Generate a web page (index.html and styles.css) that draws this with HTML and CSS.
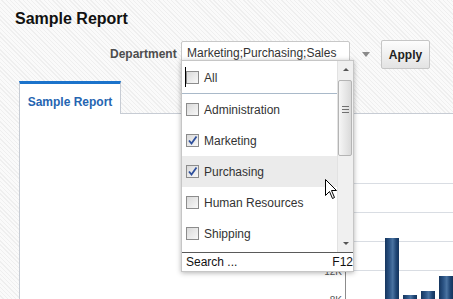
FILE: index.html
```html
<html>
<head>
    <title>Sample Report</title>
    <link rel="stylesheet" href="styles.css">
</head>
<body>
<h1 class="title">Sample Report</h1>

<div class="filter">
    <span class="filter-label">Department</span>
    <div class="select">
        <div class="select-box">Marketing;Purchasing;Sales</div>
        <div class="dropdown">
            <div class="dropdown-body">
                <ul class="options">
                    <li class="option option-all"><span class="check"></span>All</li>
                    <li class="option"><span class="check"></span>Administration</li>
                    <li class="option"><span class="check"><svg viewBox="0 0 11 11"><path d="M2 5.5 L4.5 8.5 L9.5 1.5"/></svg></span>Marketing</li>
                    <li class="option option-hover"><span class="check"><svg viewBox="0 0 11 11"><path d="M2 5.5 L4.5 8.5 L9.5 1.5"/></svg></span>Purchasing</li>
                    <li class="option"><span class="check"></span>Human Resources</li>
                    <li class="option"><span class="check"></span>Shipping</li>
                </ul>
                <div class="scrollbar">
                    <div class="scroll-btn"><span class="arrow-up"></span></div>
                    <div class="scroll-thumb"><span class="grip"></span></div>
                    <div class="scroll-track"></div>
                    <div class="scroll-btn"><span class="arrow-down"></span></div>
                </div>
            </div>
            <div class="dropdown-foot"><span>Search ...</span><span>F12</span></div>
        </div>
    </div>
    <span class="select-arrow"></span>
    <button class="apply">Apply</button>
</div>

<div class="tabs">
    <div class="tab">Sample Report</div>
</div>
<div class="panel">
    <div class="chart">
        <div class="axis">
            <span>24K</span>
            <span>20K</span>
            <span>16K</span>
            <span>12K</span>
            <span>8K</span>
        </div>
        <div class="plot">
            <div class="bar" style="height: 85px"></div>
            <div class="bar" style="height: 28px"></div>
            <div class="bar" style="height: 32px"></div>
            <div class="bar" style="height: 47px"></div>
        </div>
    </div>
</div>

<svg class="pointer" width="13" height="21" viewBox="0 0 13 21">
    <path d="M0.5 0.5 L0.5 16.5 L4.5 12.5 L7.5 19.5 L9.5 18.5 L6.5 11.5 L11.5 11.5 Z" fill="#fff" stroke="#000" stroke-width="1"/>
</svg>
</body>
</html>
```

FILE: styles.css
```css
body {
    margin: 0;
    height: 299px;
    overflow: hidden;
    position: relative;
    font-family: "Liberation Sans", Arial, sans-serif;
    font-size: 12px;
    color: #333;
    background: repeating-linear-gradient(45deg, #fafafa 0, #fafafa 2px, #efefef 2px, #efefef 3px);
}
.title {
    margin: 0;
    padding: 9px 15px 0;
    font-size: 16px;
    line-height: 19px;
    font-weight: bold;
    color: #111;
}
.filter {
    display: flex;
    align-items: flex-start;
    margin-top: 12px;
    padding-left: 110px;
    height: 29px;
}
.filter-label {
    width: 71px;
    line-height: 29px;
    font-weight: bold;
    color: #4d4d4d;
}
.select {
    position: relative;
    margin-top: 1px;
}
.select-box {
    width: 162px;
    height: 22px;
    line-height: 22px;
    padding-left: 5px;
    border: 1px solid #c8c8c8;
    border-radius: 2px;
    background: #fff;
    color: #333;
    white-space: nowrap;
}
.select-arrow {
    align-self: center;
    margin-left: 12px;
    width: 0;
    height: 0;
    border-left: 4px solid transparent;
    border-right: 4px solid transparent;
    border-top: 5px solid #8a8a8a;
}
.apply {
    margin-left: 11px;
    width: 49px;
    height: 29px;
    padding: 0;
    border: 1px solid #c6c6c6;
    border-radius: 2px;
    background: linear-gradient(#fdfdfd, #e3e3e3);
    font-family: "Liberation Sans", Arial, sans-serif;
    font-size: 12px;
    font-weight: bold;
    color: #222;
}

/* dropdown list */
.dropdown {
    position: absolute;
    left: 0;
    top: 19px;
    z-index: 10;
    width: 173px;
    box-sizing: border-box;
    border: 1px solid #c6c6c6;
    background: #fff;
    box-shadow: 0 1px 5px rgba(0, 0, 0, 0.3);
}
.dropdown-body {
    display: flex;
    height: 191px;
}
.options {
    flex: 1;
    margin: 0;
    padding: 1px 0 0;
    list-style: none;
    overflow: hidden;
}
.option {
    display: flex;
    align-items: center;
    height: 31px;
    padding-left: 4px;
    color: #333;
    white-space: nowrap;
}
.option-all {
    position: relative;
    border-bottom: 1px solid #a9b9c9;
}
.option-all::before {
    content: "";
    position: absolute;
    left: 3px;
    top: 5px;
    width: 1px;
    height: 20px;
    background: #000;
}
.option-hover {
    background: #ebebeb;
}
.check {
    display: inline-block;
    width: 11px;
    height: 11px;
    margin-right: 5px;
    border: 1px solid #8c8c8c;
    background: linear-gradient(135deg, #d9d9d9, #f8f8f8);
}
.check svg {
    display: block;
    width: 11px;
    height: 11px;
    fill: none;
    stroke: #2d4f9c;
    stroke-width: 1.8;
}
.scrollbar {
    display: flex;
    flex-direction: column;
    width: 15px;
    border-left: 1px solid #e2e2e2;
    background: #f0f0f0;
}
.scroll-btn {
    display: flex;
    align-items: center;
    justify-content: center;
    height: 17px;
}
.arrow-up {
    border-left: 3px solid transparent;
    border-right: 3px solid transparent;
    border-bottom: 3px solid #555;
}
.arrow-down {
    border-left: 3px solid transparent;
    border-right: 3px solid transparent;
    border-top: 3px solid #555;
}
.scroll-thumb {
    display: flex;
    justify-content: center;
    height: 74px;
    margin: 2px 1px 0 0;
    border: 1px solid #b4b4b4;
    border-radius: 2px;
    background: linear-gradient(90deg, #f6f6f6, #dadada);
}
.grip {
    width: 7px;
    height: 7px;
    margin-top: 25px;
    background: repeating-linear-gradient(#707070 0, #707070 1px, transparent 1px, transparent 3px);
}
.scroll-track {
    flex: 1;
}
.dropdown-foot {
    display: flex;
    justify-content: space-between;
    height: 18px;
    line-height: 18px;
    padding: 0 0 0 4px;
    border-top: 1px solid #5a5a5a;
    color: #111;
}

/* tab and panel */
.tabs {
    display: flex;
    margin-top: 12px;
    margin-left: 19px;
}
.tab {
    position: relative;
    z-index: 1;
    width: 100px;
    height: 21px;
    padding-top: 9px;
    margin-bottom: -1px;
    line-height: 18px;
    text-align: center;
    border: 1px solid #c7ccd4;
    border-top: 3px solid #1b73cb;
    border-bottom: none;
    background: #fff;
    font-weight: bold;
    color: #2565b1;
}
.panel {
    margin-left: 19px;
    height: 200px;
    border-top: 1px solid #c7ccd4;
    border-left: 1px solid #c7ccd4;
    background: #fff;
}
.chart {
    display: flex;
    margin: 69px 0 0 300px;
}
.axis {
    display: flex;
    flex-direction: column;
    width: 27px;
    padding-right: 3px;
    margin-top: -13px;
    text-align: right;
    font-size: 10px;
    line-height: 29px;
    color: #555;
}
.plot {
    flex: 1;
    display: flex;
    align-items: flex-end;
    gap: 4px;
    height: 140px;
    padding-left: 39px;
    border-left: 1px solid #8c8c8c;
    background: repeating-linear-gradient(#d9dde3 0, #d9dde3 1px, transparent 1px, transparent 29px);
}
.bar {
    width: 14px;
    flex: none;
    background: linear-gradient(90deg, #15355e 0%, #2a5283 30%, #4a73a1 55%, #1f4574 80%, #14345c 100%);
}
.pointer {
    position: absolute;
    left: 325px;
    top: 179px;
    z-index: 20;
}
```
